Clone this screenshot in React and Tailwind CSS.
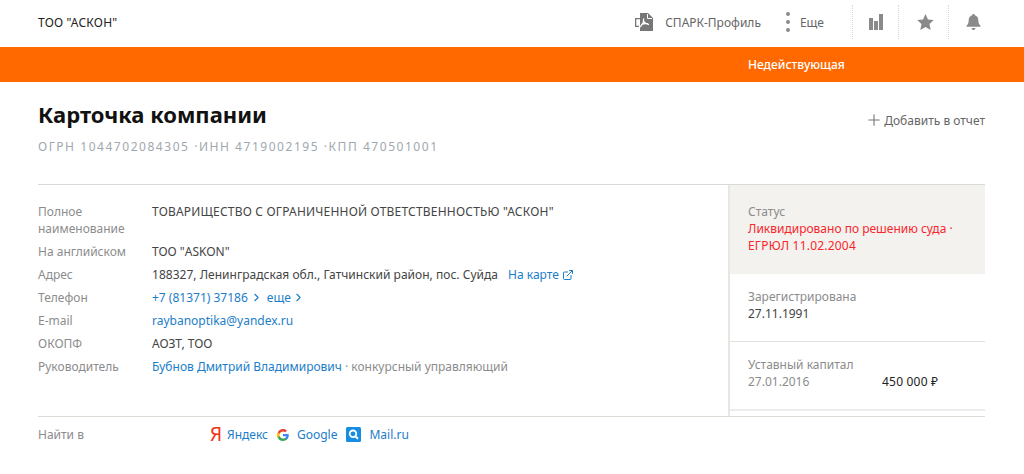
import { ChevronRight, ExternalLink, Plus } from "lucide-react";

const font = { fontFamily: '"Noto Sans", "Open Sans", sans-serif' };

const PdfIcon = () => (
  <svg width="20" height="20" viewBox="0 0 20 20" className="shrink-0">
    <path d="M6 1h8l5 5v13H6z" fill="#777" />
    <path d="M1 6h6v1.300H2.300v6.400H5V15H1z" fill="#777" />
    <path d="M13.500 2v4.500H18" stroke="#fff" strokeWidth="1" fill="none" />
    <path d="M6 15c3-3 4-6 3.500-8.500M9.500 9c1 2 2.500 3 5.500 3.500M7 12.500c2-.8 4-1 7-.8" stroke="#fff" strokeWidth="1.300" fill="none" />
  </svg>
);

const BarsIcon = () => (
  <svg width="14" height="16" viewBox="0 0 14 16" fill="#8a8a8a">
    <rect x="0" y="4" width="4" height="12" />
    <rect x="5" y="7" width="4" height="9" />
    <rect x="10" y="0" width="4" height="16" />
  </svg>
);

const StarIcon = () => (
  <svg width="17" height="16" viewBox="0 0 17 16" fill="#8a8a8a">
    <path d="M8.500 0l2.500 5.500 5.800.6-4.300 3.900 1.200 6-5.200-3-5.200 3 1.200-6L.2 6.100 6 5.500z" />
  </svg>
);

const BellIcon = () => (
  <svg width="15" height="16" viewBox="0 0 15 16" fill="#8a8a8a">
    <path d="M7.500 0c.8 0 1.300.5 1.300 1.300 2.300.6 3.500 2.400 3.500 4.900 0 2.800.8 4.300 2.200 5.600v1H.5v-1c1.400-1.300 2.200-2.800 2.200-5.600 0-2.500 1.200-4.300 3.500-4.900C6.200.5 6.700 0 7.500 0z" />
    <path d="M5.500 14h4a2 2 0 0 1-4 0z" />
  </svg>
);

const GoogleIcon = () => (
  <svg width="12" height="12" viewBox="0 0 24 24" className="shrink-0">
    <path d="M23.500 12.300c0-.8-.1-1.600-.2-2.300H12v4.500h6.500c-.3 1.500-1.100 2.700-2.400 3.600v3h3.800c2.300-2.100 3.600-5.200 3.600-8.800z" fill="#4285f4" />
    <path d="M12 24c3.200 0 6-1.100 7.900-2.900l-3.800-3c-1.100.7-2.400 1.100-4.100 1.100-3.100 0-5.800-2.100-6.700-5H1.300v3.100C3.300 21.300 7.300 24 12 24z" fill="#34a853" />
    <path d="M5.300 14.200c-.5-1.500-.5-3 0-4.500V6.600h-4a12 12 0 0 0 0 10.700z" fill="#fbbc05" />
    <path d="M12 4.800c1.800 0 3.300.6 4.600 1.800l3.400-3.400C17.900 1.200 15.200 0 12 0 7.300 0 3.300 2.700 1.300 6.600l4 3.100c.9-2.800 3.600-4.900 6.700-4.900z" fill="#ea4335" />
  </svg>
);

const MailIcon = () => (
  <svg width="15" height="15" viewBox="0 0 15 15" className="shrink-0">
    <rect width="15" height="15" rx="1.500" fill="#168de2" />
    <circle cx="7" cy="6.800" r="3.300" fill="none" stroke="#fff" strokeWidth="1.800" />
    <path d="M9.300 9.200l2.700 2.500" stroke="#fff" strokeWidth="2" />
  </svg>
);

const Row = ({ label, children }) => (
  <div className="flex">
    <div className="w-[114px] shrink-0 text-[#8c8c8c]">{label}</div>
    <div className="min-w-0 text-[#444]">{children}</div>
  </div>
);

const App = () => {
  return (
    <div style={font} className="w-[1024px] h-[474px] overflow-hidden bg-white text-[12px] leading-[17px]">
      {/* Top bar */}
      <header className="h-[47px] flex items-center pl-[38px] text-[#222]">
        <div className="flex-1 pb-[2px] text-[12px] tracking-[0.200px]">ТОО "АСКОН"</div>
        <div className="flex items-center pb-[3px] text-[#666]">
          <PdfIcon />
          <span className="ml-[11px] text-[12px]">СПАРК-Профиль</span>
          <span className="ml-[25px] flex flex-col gap-[4px]">
            <i className="block w-[4px] h-[4px] rounded-full bg-[#8a8a8a]" />
            <i className="block w-[4px] h-[4px] rounded-full bg-[#8a8a8a]" />
            <i className="block w-[4px] h-[4px] rounded-full bg-[#8a8a8a]" />
          </span>
          <span className="ml-[10px]">Еще</span>
          <div className="ml-[28px] h-[34px] w-[46px] flex items-center justify-center border-l border-dotted border-[#d8d8d8]"><BarsIcon /></div>
          <div className="h-[34px] w-[50px] pl-[3px] flex items-center justify-center border-l border-dotted border-[#d8d8d8]"><StarIcon /></div>
          <div className="h-[34px] w-[49px] flex items-center justify-center border-l border-dotted border-[#d8d8d8]"><BellIcon /></div>
          <div className="w-[27px]" />
        </div>
      </header>

      {/* Status strip */}
      <div className="h-[35px] bg-[#ff6900] flex items-center pl-[748px] pb-[1px] text-[12px] font-medium text-white">Недействующая</div>

      {/* Title */}
      <div className="ml-[38px] w-[947px] h-[103px] border-b border-[#d9d9d9] relative">
        <h1 className="pt-[18px] text-[22px] leading-[28px] font-bold text-[#111]">Карточка компании</h1>
        <div className="mt-[11px] text-[12px] leading-[16px] tracking-[1.540px] text-[#a0a8b0]">ОГРН 1044702084305 ·ИНН 4719002195 ·КПП 470501001</div>
        <div className="absolute right-0 top-[29px] flex items-center text-[#666]">
          <Plus size={18} strokeWidth={1.500} className="text-[#777]" />
          <span className="ml-[1px]">Добавить в отчет</span>
        </div>
      </div>

      {/* Details */}
      <div className="ml-[38px] w-[947px] h-[232px] flex border-b border-[#dedcd6]">
        <div className="w-[690px] pt-[18px] flex flex-col gap-[6px]">
          <Row label={<>Полное<br />наименование</>}><span className="tracking-[0.200px]">ТОВАРИЩЕСТВО С ОГРАНИЧЕННОЙ ОТВЕТСТВЕННОСТЬЮ "АСКОН"</span></Row>
          <Row label="На английском">ТОО "ASKON"</Row>
          <Row label="Адрес">
            <span className="tracking-[0.020px]">188327, Ленинградская обл., Гатчинский район, пос. Суйда</span>
            <span className="ml-[10px] text-[#1b7dc9]">На карте</span>
            <ExternalLink size={12} className="inline ml-[3px] mb-[2px] text-[#1b7dc9]" />
          </Row>
          <Row label="Телефон">
            <span className="text-[#1b7dc9] inline-flex items-center">
              +7 (81371) 37186
              <ChevronRight size={13} className="ml-[2px]" />
              <span className="ml-[4px]">еще</span>
              <ChevronRight size={13} className="ml-[1px]" />
            </span>
          </Row>
          <Row label="E-mail"><span className="text-[#1b7dc9]">raybanoptika@yandex.ru</span></Row>
          <Row label="ОКОПФ">АОЗТ, ТОО</Row>
          <Row label="Руководитель">
            <span className="text-[#1b7dc9]">Бубнов Дмитрий Владимирович</span>
            <span className="text-[#8c8c8c]"> · конкурсный управляющий</span>
          </Row>
        </div>

        <aside className="w-[257px] border-l-2 border-[#e8e6e1] h-full">
          <div className="h-[89px] bg-[#f3f2ef] pl-[18px] pt-[18px]">
            <div className="text-[#8c8c8c]">Статус</div>
            <div className="text-[#f8262c] whitespace-nowrap">Ликвидировано по решению суда ·</div>
            <div className="text-[#f8262c] tracking-[0.200px]">ЕГРЮЛ 11.02.2004</div>
          </div>
          <div className="h-[68px] border-b border-[#e3e1dc] pl-[18px] pt-[14px]">
            <div className="text-[#8c8c8c]">Зарегистрирована</div>
            <div className="text-[#444]">27.11.1991</div>
          </div>
          <div className="h-[69px] border-b-2 border-[#ececec] pl-[18px] pt-[14px]">
            <div className="text-[#8c8c8c]">Уставный капитал</div>
            <div className="flex">
              <span className="w-[134px] text-[#8c8c8c]">27.01.2016</span>
              <span className="text-[#222] tracking-[0.200px]">450 000 ₽</span>
            </div>
          </div>
        </aside>
      </div>

      {/* Search links */}
      <div className="ml-[38px] pt-[9px] flex items-start">
        <div className="w-[172px] text-[#8c8c8c]">Найти в</div>
        <div className="flex items-center text-[#1b7dc9]">
          <span className="w-[17px] text-[19px] leading-[17px] text-[#f0331a]">Я</span>
          <span>Яндекс</span>
          <span className="ml-[9px]"><GoogleIcon /></span>
          <span className="ml-[8px]">Google</span>
          <span className="ml-[9px]"><MailIcon /></span>
          <span className="ml-[8px]">Mail.ru</span>
        </div>
      </div>
    </div>
  );
};

export default App;
